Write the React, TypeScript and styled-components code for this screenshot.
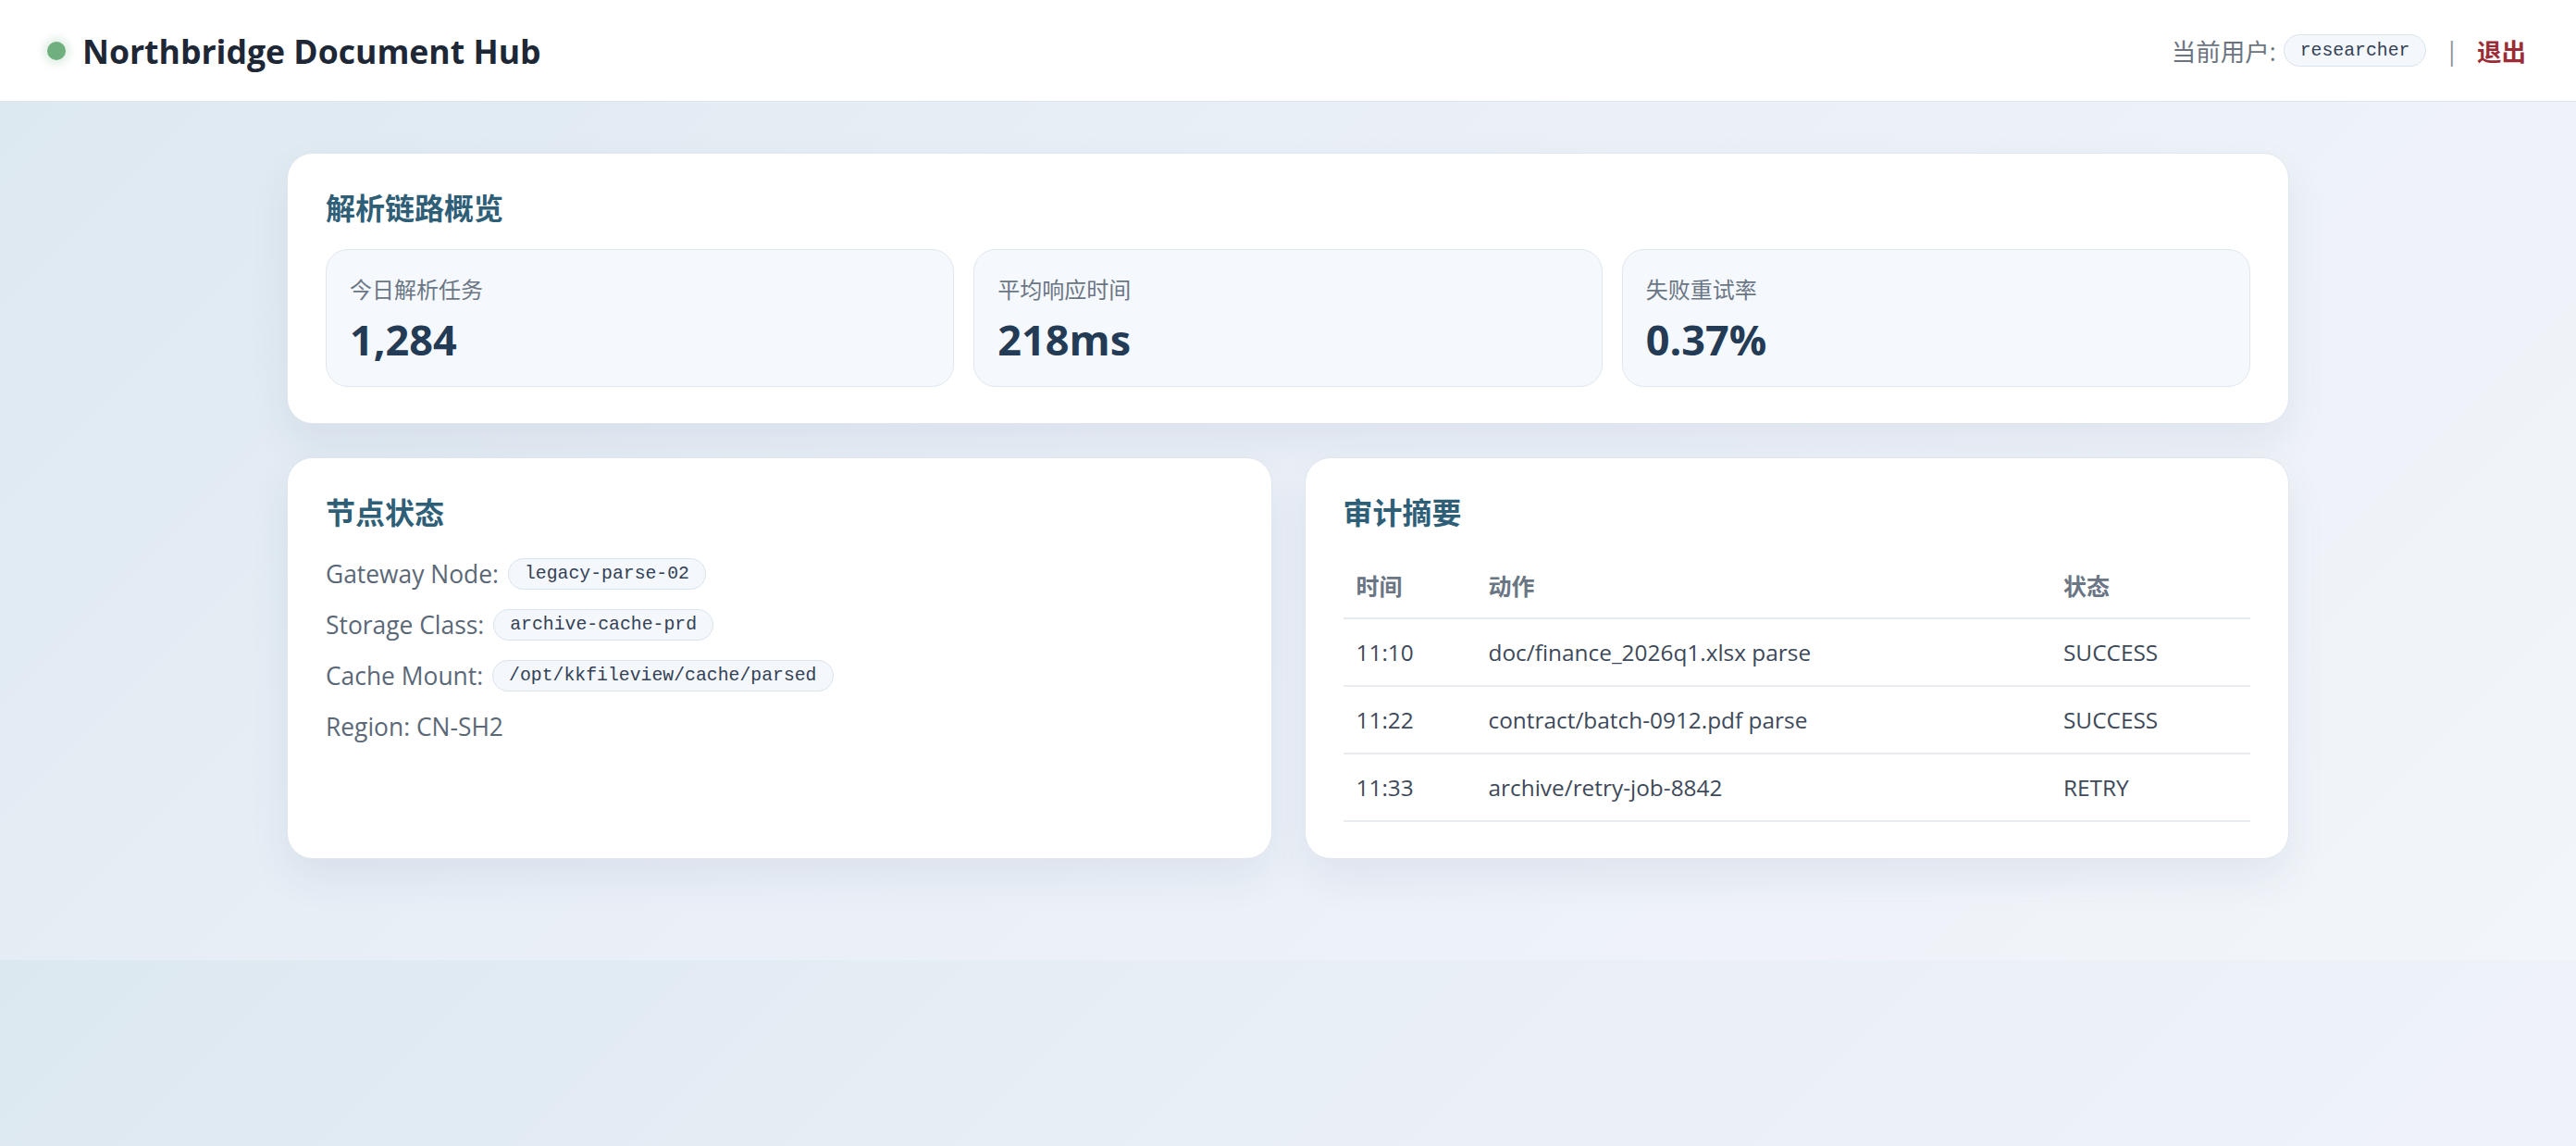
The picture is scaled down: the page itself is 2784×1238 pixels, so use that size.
import React from "react";
import styled, { createGlobalStyle } from "styled-components";

const GlobalStyle = createGlobalStyle`
  html {
    background: linear-gradient(135deg, #dce8ef 0%, #e9eff7 40%, #f2f5fa 100%);
  }
  body {
    margin: 0;
    font-family: "Segoe UI", "Open Sans", "Noto Sans CJK SC", sans-serif;
    color: #334155;
  }
  * {
    box-sizing: border-box;
  }
`;

const stats = [
  { label: "今日解析任务", value: "1,284" },
  { label: "平均响应时间", value: "218ms" },
  { label: "失败重试率", value: "0.37%" },
];

const nodeInfo = [
  { label: "Gateway Node:", code: "legacy-parse-02" },
  { label: "Storage Class:", code: "archive-cache-prd" },
  { label: "Cache Mount:", code: "/opt/kkfileview/cache/parsed" },
  { label: "Region: CN-SH2" },
];

const auditRows = [
  { time: "11:10", action: "doc/finance_2026q1.xlsx parse", status: "SUCCESS" },
  { time: "11:22", action: "contract/batch-0912.pdf parse", status: "SUCCESS" },
  { time: "11:33", action: "archive/retry-job-8842", status: "RETRY" },
];

const App = () => {
  return (
    <>
      <GlobalStyle />
      <Header>
        <Brand>
          <StatusDot />
          <BrandTitle>Northbridge Document Hub</BrandTitle>
        </Brand>
        <UserBar>
          <span>当前用户:</span>
          <Code $header>researcher</Code>
          <Divider>|</Divider>
          <Logout href="#">退出</Logout>
        </UserBar>
      </Header>

      <Main>
        <Container>
          <Card>
            <CardTitle>解析链路概览</CardTitle>
            <StatGrid>
              {stats.map((s) => (
                <StatBox key={s.label}>
                  <StatLabel>{s.label}</StatLabel>
                  <StatValue>{s.value}</StatValue>
                </StatBox>
              ))}
            </StatGrid>
          </Card>

          <TwoColumns>
            <Card>
              <CardTitle>节点状态</CardTitle>
              <InfoList>
                {nodeInfo.map((n) => (
                  <InfoRow key={n.label}>
                    <span>{n.label}</span>
                    {n.code && <Code>{n.code}</Code>}
                  </InfoRow>
                ))}
              </InfoList>
            </Card>

            <Card>
              <CardTitle>审计摘要</CardTitle>
              <AuditTable>
                <thead>
                  <tr>
                    <Th $width="143px">时间</Th>
                    <Th>动作</Th>
                    <Th $width="216px">状态</Th>
                  </tr>
                </thead>
                <tbody>
                  {auditRows.map((r) => (
                    <tr key={r.time}>
                      <Td>{r.time}</Td>
                      <Td>{r.action}</Td>
                      <Td>{r.status}</Td>
                    </tr>
                  ))}
                </tbody>
              </AuditTable>
            </Card>
          </TwoColumns>
        </Container>
      </Main>
    </>
  );
};
export default App;

const Header = styled.header`
  display: flex;
  align-items: center;
  justify-content: space-between;
  height: 110px;
  padding: 0 54px 0 51px;
  background-color: #ffffff;
  border-bottom: 1px solid #dde5ee;
`;

const Brand = styled.div`
  display: flex;
  align-items: center;
  gap: 18px;
`;

const StatusDot = styled.span`
  width: 20px;
  height: 20px;
  border-radius: 50%;
  background-color: #6fb07e;
  box-shadow: 0 0 10px 4px rgba(111, 176, 126, 0.22);
`;

const BrandTitle = styled.h1`
  margin: 0;
  font-size: 35.6px;
  font-weight: 700;
  color: #1e2736;
`;

const UserBar = styled.div`
  display: flex;
  align-items: center;
  gap: 8px;
  font-size: 26.5px;
  color: #6b7480;
`;

const Divider = styled.span`
  margin: 0 12px;
  color: #8c96a2;
`;

const Logout = styled.a`
  font-weight: 700;
  color: #9b2c35;
  text-decoration: none;
`;

const Code = styled.code<{ $header?: boolean }>`
  display: inline-flex;
  align-items: center;
  height: ${(p) => (p.$header ? "35px" : "34px")};
  padding: 0 17px;
  border-radius: 999px;
  border: 1px solid #d9e3ee;
  background-color: #f4f7fc;
  font-family: "Liberation Mono", monospace;
  font-size: 19.8px;
  color: #334155;
`;

const Main = styled.main`
  padding: 55px 40px 109px;
`;

const Container = styled.div`
  display: flex;
  flex-direction: column;
  gap: 36px;
  max-width: 2164px;
  margin: 0 auto;
`;

const Card = styled.section`
  padding: 40px 41px 39px;
  background-color: #ffffff;
  border: 1px solid #dfe6ee;
  border-radius: 28px;
  box-shadow: 0 20px 45px rgba(30, 58, 95, 0.07);
`;

const CardTitle = styled.h2`
  margin: 0 0 25px;
  font-size: 32px;
  line-height: 38px;
  font-weight: 700;
  color: #2f5e77;
`;

const StatGrid = styled.div`
  display: grid;
  grid-template-columns: repeat(3, 1fr);
  gap: 21px;
`;

const StatBox = styled.div`
  padding: 26px 25px 23px;
  background-color: #f5f8fc;
  border: 1px solid #dfe7f0;
  border-radius: 24px;
`;

const StatLabel = styled.div`
  font-size: 24px;
  line-height: 33px;
  color: #6b7685;
`;

const StatValue = styled.div`
  margin-top: 11px;
  font-size: 45px;
  line-height: 54px;
  font-weight: 700;
  color: #243b55;
`;

const TwoColumns = styled.div`
  display: grid;
  grid-template-columns: 1fr 1fr;
  gap: 35px;
`;

const InfoList = styled.div`
  display: flex;
  flex-direction: column;
  gap: 12px;
  margin-top: 2px;
`;

const InfoRow = styled.div`
  display: flex;
  align-items: center;
  gap: 10px;
  min-height: 43px;
  font-size: 26.4px;
  color: #5b6877;
`;

const AuditTable = styled.table`
  width: 100%;
  border-collapse: collapse;
`;

const Th = styled.th<{ $width?: string }>`
  width: ${(p) => p.$width || "auto"};
  padding: 21px 14px 20px;
  text-align: left;
  font-size: 25px;
  line-height: 28px;
  font-weight: 700;
  color: #6b7685;
  border-bottom: 2px solid #e6ebf0;
`;

const Td = styled.td`
  padding: 21.5px 14px;
  font-size: 24.4px;
  line-height: 28px;
  color: #3d4959;
  border-bottom: 2px solid #e8ecf1;
`;
